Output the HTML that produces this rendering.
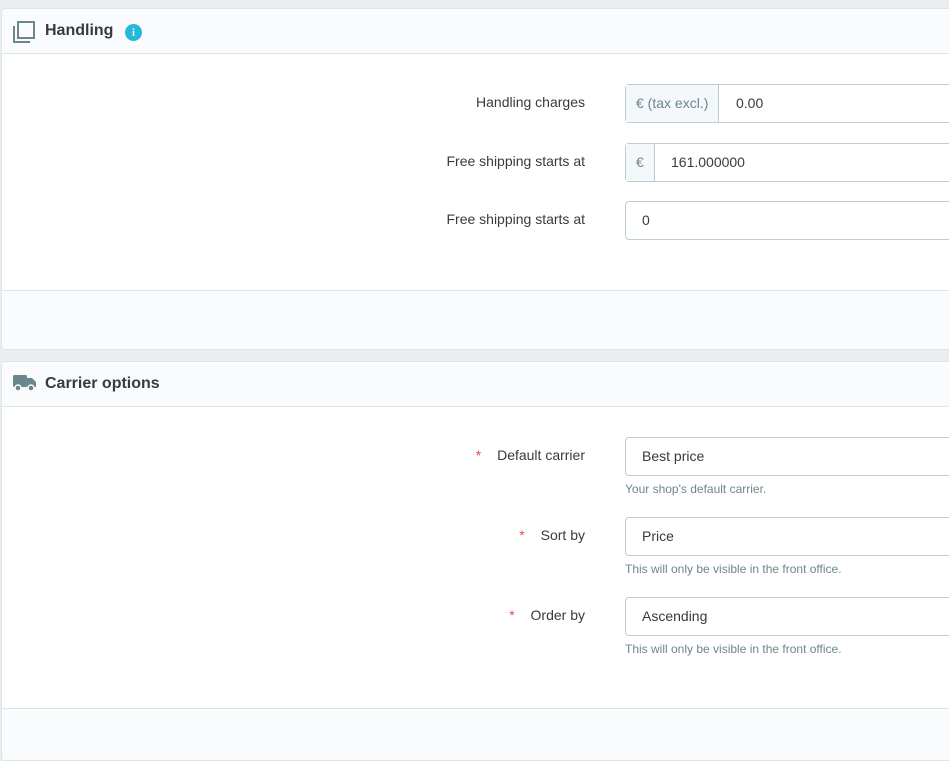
<!DOCTYPE html>
<html><head><meta charset="utf-8"><style>
*{box-sizing:border-box;margin:0;padding:0}
body{width:949px;height:753px;overflow:hidden;background:#ebedef;font-family:"Liberation Sans",sans-serif;color:#363a41;position:relative}
.panel{position:absolute;left:1px;width:960px;background:#fff;border:1px solid #dbe6e9;border-radius:4px;overflow:hidden}
.hd{position:absolute;left:0;right:0;top:0;height:45px;background:#fafbfc;border-bottom:1px solid #dbe6e9;font-size:16px;font-weight:bold;color:#363a41}
.hd span{position:absolute;left:43px;top:13px}
.ft{position:absolute;left:0;right:0;background:#fafbfc;border-top:1px solid #dbe6e9}
.lbl{position:absolute;right:375px;font-size:14px;color:#363a41;text-align:right;white-space:nowrap}
.req{color:#e24c4c;margin-right:12px}
.inp{position:absolute;left:623px;width:400px;height:39px;border:1px solid #bbcdd2;border-radius:4px;font-size:14px;background:#fff}
.inp .add{position:absolute;left:0;top:0;bottom:0;background:#f4f8fa;border-right:1px solid #bbcdd2;color:#6c868e;padding:0 10px;line-height:37px}
.inp .v{position:absolute;top:0;line-height:37px}
.help{position:absolute;left:623px;font-size:12px;color:#6c868e}
</style></head><body>
<div class="panel" style="top:8px;height:342px">
 <div class="hd">
  <svg style="position:absolute;left:11px;top:12px" width="22" height="22" viewBox="0 0 22 22"><rect x="5" y="1" width="16" height="16" fill="none" stroke="#6c868e" stroke-width="2"/><path d="M1 5v16h16" fill="none" stroke="#6c868e" stroke-width="2"/></svg>
  <span>Handling</span>
  <svg style="position:absolute;left:123px;top:15px" width="17" height="17"><circle cx="8.5" cy="8.5" r="8.5" fill="#25b9d7"/><rect x="7.7" y="7" width="1.6" height="5" fill="#fff"/><rect x="7.7" y="4.5" width="1.6" height="1.5" fill="#fff"/></svg>
 </div>
 <div class="lbl" style="top:85px">Handling charges</div>
 <div class="inp" style="top:75px"><div class="add">€ (tax excl.)</div><div class="v" style="left:110px">0.00</div></div>
 <div class="lbl" style="top:144px">Free shipping starts at</div>
 <div class="inp" style="top:134px"><div class="add">€</div><div class="v" style="left:45px">161.000000</div></div>
 <div class="lbl" style="top:202px">Free shipping starts at</div>
 <div class="inp" style="top:192px"><div class="v" style="left:16px">0</div></div>
 <div class="ft" style="top:281px;height:62px"></div>
</div>
<div class="panel" style="top:361px;height:400px">
 <div class="hd">
  <svg style="position:absolute;left:11px;top:13px" width="23" height="17" viewBox="0 0 23 17"><rect x="0" y="0" width="14" height="12" rx="1.5" fill="#6c868e"/><path d="M14 3h5l4 4v5h-9z" fill="#6c868e"/><circle cx="5" cy="13" r="3" fill="#6c868e" stroke="#fafbfc" stroke-width="1.5"/><circle cx="18" cy="13" r="3" fill="#6c868e" stroke="#fafbfc" stroke-width="1.5"/></svg>
  <span>Carrier options</span>
 </div>
 <div class="lbl" style="top:85px"><span class="req">*</span> Default carrier</div>
 <div class="inp" style="top:75px"><div class="v" style="left:16px">Best price</div></div>
 <div class="help" style="top:120px">Your shop's default carrier.</div>
 <div class="lbl" style="top:165px"><span class="req">*</span> Sort by</div>
 <div class="inp" style="top:155px"><div class="v" style="left:16px">Price</div></div>
 <div class="help" style="top:200px">This will only be visible in the front office.</div>
 <div class="lbl" style="top:245px"><span class="req">*</span> Order by</div>
 <div class="inp" style="top:235px"><div class="v" style="left:16px">Ascending</div></div>
 <div class="help" style="top:280px">This will only be visible in the front office.</div>
 <div class="ft" style="top:346px;height:60px"></div>
</div>
</body></html>
